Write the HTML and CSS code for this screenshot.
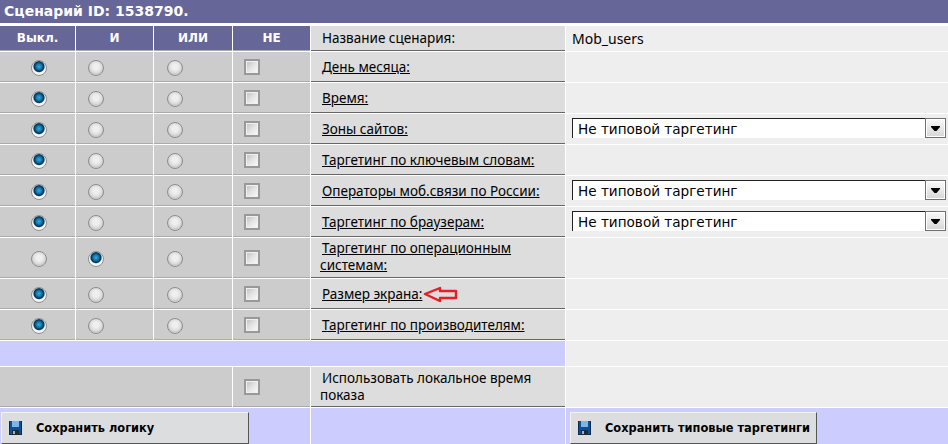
FILE: index.html
```html
<!DOCTYPE html>
<html lang="ru">
<head>
<meta charset="utf-8">
<title>Сценарий</title>
<link rel="stylesheet" href="styles.css">
</head>
<body>
<h1 class="title">Сценарий ID: 1538790.</h1>
<form class="grid">
  <div class="head">Выкл.</div><div class="head">И</div><div class="head">ИЛИ</div><div class="head">НЕ</div>
  <div class="label">Название сценария:</div><div class="value"><span class="name">Mob_users</span></div>

  <div class="c c1"><input class="r" type="radio" name="a1" checked></div><div class="c c2"><input class="r" type="radio" name="a1"></div><div class="c c3"><input class="r" type="radio" name="a1"></div><div class="c c4"><input class="k" type="checkbox"></div>
  <div class="label"><a href="#">День месяца:</a></div><div class="value"></div>

  <div class="c c1"><input class="r" type="radio" name="a2" checked></div><div class="c c2"><input class="r" type="radio" name="a2"></div><div class="c c3"><input class="r" type="radio" name="a2"></div><div class="c c4"><input class="k" type="checkbox"></div>
  <div class="label"><a href="#">Время:</a></div><div class="value"></div>

  <div class="c c1"><input class="r" type="radio" name="a3" checked></div><div class="c c2"><input class="r" type="radio" name="a3"></div><div class="c c3"><input class="r" type="radio" name="a3"></div><div class="c c4"><input class="k" type="checkbox"></div>
  <div class="label"><a href="#">Зоны сайтов:</a></div><div class="value"><div class="sel"><select><option>Не типовой таргетинг</option></select><span class="drop"><svg width="9" height="5" viewBox="0 0 9 5"><path d="M0 0h9v1L5.5 5h-2L0 1z" fill="#000"/></svg></span></div></div>

  <div class="c c1"><input class="r" type="radio" name="a4" checked></div><div class="c c2"><input class="r" type="radio" name="a4"></div><div class="c c3"><input class="r" type="radio" name="a4"></div><div class="c c4"><input class="k" type="checkbox"></div>
  <div class="label"><a href="#">Таргетинг по ключевым словам:</a></div><div class="value"></div>

  <div class="c c1"><input class="r" type="radio" name="a5" checked></div><div class="c c2"><input class="r" type="radio" name="a5"></div><div class="c c3"><input class="r" type="radio" name="a5"></div><div class="c c4"><input class="k" type="checkbox"></div>
  <div class="label"><a href="#">Операторы моб.связи по России:</a></div><div class="value"><div class="sel"><select><option>Не типовой таргетинг</option></select><span class="drop"><svg width="9" height="5" viewBox="0 0 9 5"><path d="M0 0h9v1L5.5 5h-2L0 1z" fill="#000"/></svg></span></div></div>

  <div class="c c1"><input class="r" type="radio" name="a6" checked></div><div class="c c2"><input class="r" type="radio" name="a6"></div><div class="c c3"><input class="r" type="radio" name="a6"></div><div class="c c4"><input class="k" type="checkbox"></div>
  <div class="label"><a href="#">Таргетинг по браузерам:</a></div><div class="value"><div class="sel"><select><option>Не типовой таргетинг</option></select><span class="drop"><svg width="9" height="5" viewBox="0 0 9 5"><path d="M0 0h9v1L5.5 5h-2L0 1z" fill="#000"/></svg></span></div></div>

  <div class="c c1"><input class="r" type="radio" name="a7"></div><div class="c c2"><input class="r" type="radio" name="a7" checked></div><div class="c c3"><input class="r" type="radio" name="a7"></div><div class="c c4"><input class="k" type="checkbox"></div>
  <div class="label wrap"><a href="#">Таргетинг по операционным системам:</a></div><div class="value"></div>

  <div class="c c1"><input class="r" type="radio" name="a8" checked></div><div class="c c2"><input class="r" type="radio" name="a8"></div><div class="c c3"><input class="r" type="radio" name="a8"></div><div class="c c4"><input class="k" type="checkbox"></div>
  <div class="label"><a href="#">Размер экрана:</a><svg class="mark" width="35" height="16" viewBox="0 0 35 16"><path d="M2 8 17 2V5H33V12H17V15Z" fill="none" stroke="#ea1c24" stroke-width="2.4" stroke-linejoin="round"/></svg></div><div class="value"></div>

  <div class="c c1"><input class="r" type="radio" name="a9" checked></div><div class="c c2"><input class="r" type="radio" name="a9"></div><div class="c c3"><input class="r" type="radio" name="a9"></div><div class="c c4"><input class="k" type="checkbox"></div>
  <div class="label"><a href="#">Таргетинг по производителям:</a></div><div class="value"></div>

  <div class="band"></div><div class="value"></div>

  <div class="c blank"></div><div class="c c4"><input class="k" type="checkbox"></div>
  <div class="label wrap low">Использовать локальное время показа</div><div class="value"></div>

  <div class="foot span4"><button class="btn" type="button"><svg class="disk" width="13" height="14" viewBox="0 0 13 14"><path d="M0 0h13v14H0z" fill="#0b4f96"/><path d="M3 0h7v6H3z" fill="#7fb4e4"/><path d="M0 0h1v14H0zM12 0h1v14h-1zM1 13h11v1H1z" fill="#0d2a52"/><path d="M3 9h7v5H3z" fill="#24292e"/><path d="M4 10h2v3H4z" fill="#a8b0b6"/></svg>Сохранить логику</button></div>
  <div class="foot"></div>
  <div class="foot right"><button class="btn wide" type="button"><svg class="disk" width="13" height="14" viewBox="0 0 13 14"><path d="M0 0h13v14H0z" fill="#0b4f96"/><path d="M3 0h7v6H3z" fill="#7fb4e4"/><path d="M0 0h1v14H0zM12 0h1v14h-1zM1 13h11v1H1z" fill="#0d2a52"/><path d="M3 9h7v5H3z" fill="#24292e"/><path d="M4 10h2v3H4z" fill="#a8b0b6"/></svg>Сохранить типовые таргетинги</button></div>
</form>
</body>
</html>
```
FILE: styles.css
```css
* { box-sizing: border-box; }
html, body { margin: 0; padding: 0; background: #fff; }
body { width: 948px; height: 444px; overflow: hidden; font-family: "DejaVu Sans", Verdana, sans-serif; color: #000; }
.title {
  margin: 0 0 3px;
  height: 23px;
  padding-left: 4px;
  background: #666699;
  color: #fff;
  font-size: 14px;
  line-height: 23px;
  font-weight: bold;
}
.grid {
  display: grid;
  grid-template-columns: 75px 77px 78px 77px 254px 382px;
  grid-template-rows: 25px repeat(6, 30px) 40px 30px 30px 25px 40px 36px;
  gap: 1px;
}
.head {
  background: #666699;
  color: #fff;
  font-size: 12px;
  font-weight: bold;
  display: flex;
  align-items: center;
  justify-content: center;
  border-bottom: 1px solid #aaa;
}
.label {
  background: #dddddd;
  border-bottom: 1px solid #666;
  padding-left: 11px;
  font-family: "Noto Sans", "DejaVu Sans", sans-serif;
  font-size: 13.5px;
  display: flex;
  align-items: center;
}
.label a { color: #000; text-decoration: underline; }
.wrap { display: block; padding: 2px 10px 0 9px; line-height: 17px; text-indent: 2px; }
.low { padding-top: 3px; }
.value {
  background: #eeeeee;
  display: flex;
  align-items: center;
  padding-left: 6px;
  font-family: "Noto Sans", "DejaVu Sans", sans-serif;
  font-size: 14px;
}
.c {
  background: #cccccc;
  border-bottom: 1px solid #aaa;
  display: flex;
  align-items: center;
}
.c1 { justify-content: center; padding-left: 3px; }
.c2 { padding-left: 12px; }
.c3 { padding-left: 13px; }
.c4 { padding-left: 11px; }
.blank { grid-column: span 3; }
.band { grid-column: span 5; background: #ccccff; }
.foot { background: #ccccff; padding-top: 4px; }
.span4 { grid-column: span 4; padding-left: 1px; }
.right { padding-left: 4px; }
.r, .k { appearance: none; margin: 0; width: 16px; height: 16px; display: block; }
.r {
  border-radius: 50%;
  border: 1px solid #8e8e8e;
  background: radial-gradient(circle at 50% 42%, #efefef 0 25%, #d9d9d9 58%, #c4c4c4 68%, #f4f4f4 82%);
  margin-top: 3px;
}
.r:checked {
  background:
    radial-gradient(circle at 50% 40%, #3ba9d8 0, #0f77ac 26%, #05395c 42%, #05395c 46%, #f4f4f4 56%),
    #f4f4f4;
}
.k {
  border: 2px solid #999;
  background: linear-gradient(135deg, #bdbdbd 0%, #e4e4e4 50%, #fbfbfb 100%);
  box-shadow: inset 0 0 0 1px #f0f0f0;
}
.sel { position: relative; width: 374px; height: 20px; margin-bottom: 2px; }
.sel select {
  appearance: none;
  width: 100%;
  height: 100%;
  border: 0;
  border-top: 1px solid #222;
  border-left: 1px solid #222;
  border-radius: 0;
  background: #fff;
  padding: 0 0 0 5px;
  font: 13.6px "DejaVu Sans", Verdana, sans-serif;
  color: #000;
}
.drop {
  position: absolute;
  right: 0;
  top: 0;
  width: 21px;
  height: 20px;
  border: 1px solid #707070;
  box-shadow: inset 0 0 0 1px #fff;
  background: linear-gradient(#fafafa, #d6d6d6);
  display: flex;
  align-items: center;
  justify-content: center;
  pointer-events: none;
}
.mark { margin-left: 1px; flex: none; }
.btn {
  height: 32px;
  width: 248px;
  display: flex;
  align-items: center;
  padding: 0 0 0 7px;
  background: #dcdddf;
  border: 1px solid;
  border-color: #f2f2f2 #555 #555 #f2f2f2;
  font: bold 11.4px "DejaVu Sans", Verdana, sans-serif;
  color: #000;
}
.wide { width: 247px; }
.disk { margin-right: 14px; flex: none; }
```
